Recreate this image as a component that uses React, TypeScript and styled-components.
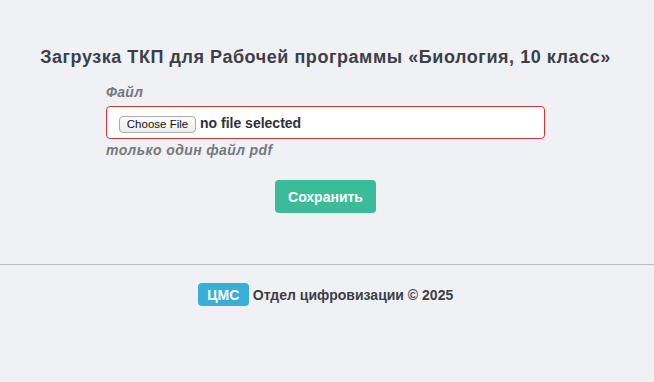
import React from 'react';
import styled, { createGlobalStyle } from 'styled-components';

const GlobalStyle = createGlobalStyle`
  html, body {
    margin: 0;
    padding: 0;
    background: #f0f1f5;
    font-family: "Liberation Sans", Arial, sans-serif;
    color: #3b3f48;
  }
`;

const Page = styled.div`
  width: 654px;
  min-height: 382px;
  background: #f0f1f5;
`;

const Main = styled.main`
  display: flex;
  flex-direction: column;
  align-items: center;
  padding: 46px 3px 51px 0;
`;

const Title = styled.h1`
  margin: 0;
  font-size: 18px;
  line-height: 22px;
  font-weight: 700;
  letter-spacing: 0.55px;
  color: #3b3f48;
  text-align: center;
  white-space: nowrap;
`;

const Form = styled.form`
  width: 439px;
  margin-top: 15px;
  display: flex;
  flex-direction: column;
`;

const Label = styled.label`
  font-size: 14px;
  line-height: 18px;
  font-style: italic;
  font-weight: 700;
  letter-spacing: 0.3px;
  color: #76787c;
`;

const FileBox = styled.div<{ $invalid?: boolean }>`
  margin-top: 5px;
  height: 31px;
  display: flex;
  align-items: center;
  gap: 4px;
  padding: 0 12px;
  background: #fff;
  border: 1px solid ${(p) => (p.$invalid ? '#d0363f' : '#ccc')};
  border-radius: 4px;
`;

const ChooseButton = styled.span`
  display: inline-flex;
  align-items: center;
  justify-content: center;
  box-sizing: border-box;
  width: 77px;
  height: 17px;
  margin-top: 3px;
  font-family: "Liberation Sans", Arial, sans-serif;
  font-size: 11.5px;
  color: #111;
  background: linear-gradient(#fdfdfd, #ececec);
  border: 1px solid #a9a9a9;
  border-radius: 4px;
`;

const FileName = styled.span`
  font-size: 14px;
  font-weight: 700;
  color: #2d3038;
`;

const Help = styled.div`
  margin-top: 2px;
  font-size: 14px;
  line-height: 18px;
  font-style: italic;
  font-weight: 700;
  letter-spacing: 0.4px;
  color: #76787c;
`;

const SaveButton = styled.button`
  align-self: center;
  margin-top: 21px;
  width: 101px;
  height: 33px;
  border: none;
  border-radius: 4px;
  background: #3bbc98;
  color: #fff;
  font-family: "Liberation Sans", Arial, sans-serif;
  font-size: 14px;
  font-weight: 700;
  cursor: pointer;
`;

const Divider = styled.hr`
  margin: 0;
  border: none;
  border-top: 1px solid #bcbcbe;
`;

const Footer = styled.footer`
  display: flex;
  justify-content: center;
  align-items: center;
  gap: 4px;
  padding: 18px 3px 0 0;
`;

const Badge = styled.span`
  display: inline-flex;
  align-items: center;
  justify-content: center;
  width: 51px;
  height: 23px;
  border-radius: 4px;
  background: #38afd7;
  color: #fff;
  font-size: 14px;
  font-weight: 700;
`;

const FooterText = styled.span`
  font-size: 14px;
  font-weight: 700;
  color: #3b3f48;
`;

const App: React.FC = () => {
  return (
    <Page>
      <GlobalStyle />
      <Main>
        <Title>Загрузка ТКП для Рабочей программы «Биология, 10 класс»</Title>
        <Form onSubmit={(e) => e.preventDefault()}>
          <Label>Файл</Label>
          <FileBox $invalid>
            <ChooseButton>Choose File</ChooseButton>
            <FileName>no file selected</FileName>
          </FileBox>
          <Help>только один файл pdf</Help>
          <SaveButton type="submit">Сохранить</SaveButton>
        </Form>
      </Main>
      <Divider />
      <Footer>
        <Badge>ЦМС</Badge>
        <FooterText>Отдел цифровизации © 2025</FooterText>
      </Footer>
    </Page>
  );
};

export default App;
